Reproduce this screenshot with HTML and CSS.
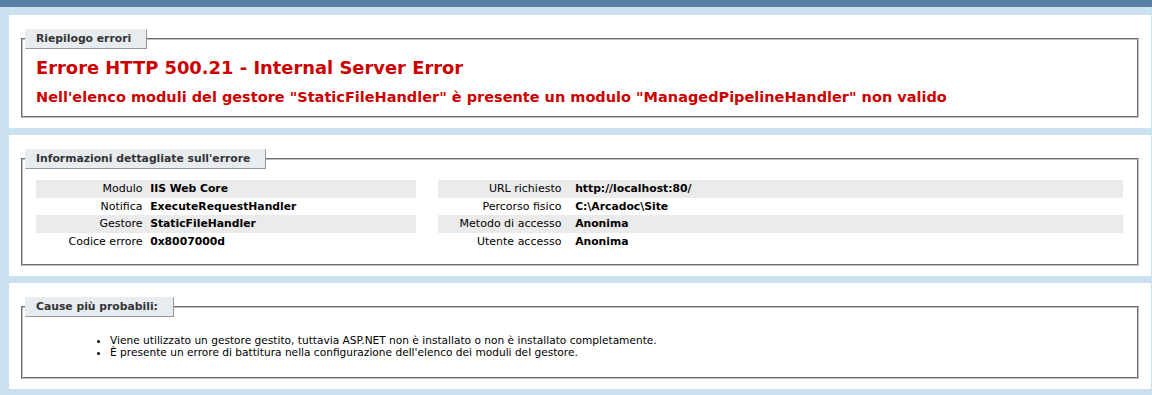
FILE: index.html
```html
<!DOCTYPE html>
<html lang="it">
<head>
  <meta charset="UTF-8" />
  <title>IIS 7.5 Errore dettagliato - 500.21 - Internal Server Error</title>
  <link rel="stylesheet" href="styles.css">
</head>
<body>
  <div id="header"></div>

  <div id="content">
    <div class="content-container summary-container">
      <fieldset>
        <legend>Riepilogo errori</legend>
        <h2>Errore HTTP 500.21 - Internal Server Error</h2>
        <h3>Nell'elenco moduli del gestore "StaticFileHandler" è presente un modulo "ManagedPipelineHandler" non valido</h3>
      </fieldset>
    </div>

    <div class="content-container">
      <fieldset>
        <legend>Informazioni dettagliate sull'errore</legend>
        <div class="details">
          <div id="details-left">
            <table>
              <tr class="alt"><th>Modulo</th><td>IIS Web Core</td></tr>
              <tr><th>Notifica</th><td>ExecuteRequestHandler</td></tr>
              <tr class="alt"><th>Gestore</th><td>StaticFileHandler</td></tr>
              <tr><th>Codice errore</th><td>0x8007000d</td></tr>
            </table>
          </div>
          <div id="details-right">
            <table>
              <tr class="alt"><th>URL richiesto</th><td>http://localhost:80/</td></tr>
              <tr><th>Percorso fisico</th><td>C:\Arcadoc\Site</td></tr>
              <tr class="alt"><th>Metodo di accesso</th><td>Anonima</td></tr>
              <tr><th>Utente accesso</th><td>Anonima</td></tr>
            </table>
          </div>
        </div>
      </fieldset>
    </div>

    <div class="content-container">
      <fieldset>
        <legend>Cause più probabili:</legend>
        <ul>
          <li>Viene utilizzato un gestore gestito, tuttavia ASP.NET non è installato o non è installato completamente.</li>
          <li>È presente un errore di battitura nella configurazione dell'elenco dei moduli del gestore.</li>
        </ul>
      </fieldset>
    </div>
  </div>
</body>
</html>
```

FILE: styles.css
```css
body {
  margin: 0;
  font-size: 11px;
  line-height: 12px;
  font-family: "DejaVu Sans", Verdana, sans-serif;
  background: #cbe1ef;
  color: #000;
  height: 395px;
  overflow: hidden;
}
#header {
  height: 7px;
  background-color: #5a7fa5;
}
#content {
  margin: 0 0 0 9px;
}
.content-container {
  background: #fff;
  width: 1122px;
  margin-top: 8px;
  padding: 10px;
}
.content-container + .content-container {
  margin-top: 7px;
}
fieldset {
  margin: 4px 2px 0 2px;
  padding: 0 14px 10px 13px;
  border: 2px groove #c0c0c0;
}
legend {
  color: #333;
  padding: 2px 15px 3px 10px;
  margin: 0 0 0 -11px;
  border-top: 1px solid #ededed;
  border-left: 1px solid #ededed;
  border-right: 1px solid #969696;
  border-bottom: 1px solid #969696;
  background: #e7ecf0;
  font-weight: bold;
  font-size: 10.8px;
  line-height: 13px;
}
h2 {
  font-size: 17.9px;
  line-height: 22px;
  margin: 8px 0 0 0;
  color: #cc0000;
}
h3 {
  font-size: 14.5px;
  line-height: 18px;
  margin: 9px 0 0 0;
  color: #cc0000;
}
.details {
  display: flex;
  gap: 2%;
  margin-top: 7px;
}
#details-left {
  width: 35%;
}
#details-right {
  width: 63%;
}
table {
  margin: 4px 0;
  width: 100%;
  border-collapse: collapse;
}
td, th {
  vertical-align: top;
  padding: 3px 0;
  line-height: 11.5px;
  text-align: left;
  font-weight: bold;
}
td {
  font-size: 10.8px;
}
th {
  width: 30%;
  text-align: right;
  padding-right: 2%;
  font-weight: normal;
}
#details-right th {
  width: 20%;
}
tr.alt th, tr.alt td {
  background-color: #ebebeb;
}
ul {
  margin: 18px 0 9px 42px;
  padding-left: 32px;
  font-size: 10.6px;
  line-height: 11.5px;
}
```
